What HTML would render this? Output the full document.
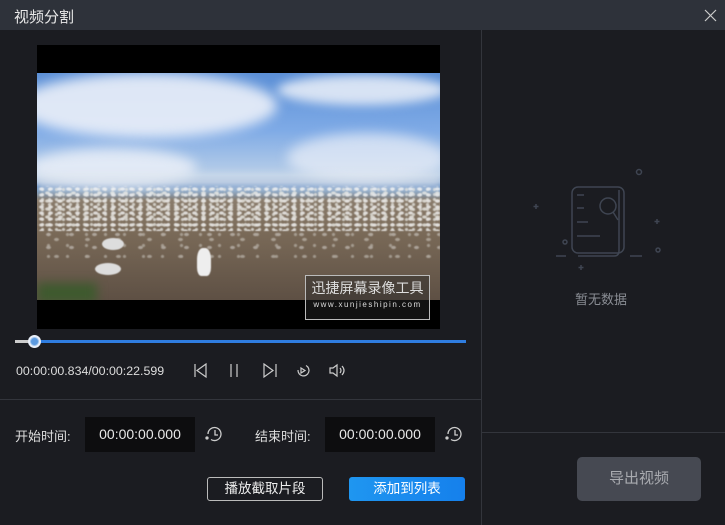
<!DOCTYPE html>
<html><head><meta charset="utf-8"><style>
*{margin:0;padding:0;box-sizing:border-box}
body{width:725px;height:525px;background:#1b1c21;font-family:"Liberation Sans","Noto Sans CJK SC",sans-serif;color:#ddd;position:relative;overflow:hidden}
.abs{position:absolute}
.title{left:0;top:0;width:725px;height:30px;background:#2e323a}
.title span{position:absolute;left:14px;top:6px;font-size:15px;color:#e8e8e8}
.btn{font-size:13px;text-align:center;border-radius:3px}
.birds{background-image:
radial-gradient(ellipse 3px 2px at 50% 50%,rgba(245,245,245,.95) 60%,transparent 100%),
radial-gradient(ellipse 3px 2px at 50% 50%,rgba(240,240,235,.9) 60%,transparent 100%),
radial-gradient(ellipse 2px 2px at 50% 50%,rgba(230,230,225,.9) 60%,transparent 100%);
background-size:9px 6px,13px 8px,7px 5px;background-position:0 0,4px 3px,2px 1px;filter:blur(.6px)}
</style></head><body>
<div class="abs title"><span>视频分割</span>
<svg class="abs" style="left:704px;top:9px" width="13" height="13"><path d="M1 1L12 12M12 1L1 12" stroke="#ccc" stroke-width="1.2"/></svg></div>
<div class="abs" style="left:481px;top:30px;width:1px;height:495px;background:#33353c"></div>
<div class="abs" style="left:0;top:399px;width:481px;height:1px;background:#33353c"></div>
<div class="abs" style="left:482px;top:432px;width:243px;height:1px;background:#33353c"></div>
<div class="abs" style="left:37px;top:45px;width:403px;height:284px;background:#000"></div>
<div class="abs" style="left:37px;top:73px;width:403px;height:227px;overflow:hidden;background:linear-gradient(#5b8fd6 0%,#7eaae6 25%,#b9cfe8 45%,#9cb6d8 48%,#5a86c0 50%,#6c8fb5 52%,#8a7c6c 56%,#7a6a58 70%,#5e5044 100%)">
<div class="abs" style="left:-20px;top:0;width:260px;height:65px;border-radius:50%;background:rgba(235,240,248,.9);filter:blur(6px)"></div>
<div class="abs" style="left:240px;top:2px;width:170px;height:30px;border-radius:50%;background:rgba(235,240,248,.85);filter:blur(5px)"></div>
<div class="abs" style="left:-10px;top:75px;width:170px;height:40px;border-radius:50%;background:rgba(235,240,248,.85);filter:blur(6px)"></div>
<div class="abs" style="left:250px;top:60px;width:160px;height:50px;border-radius:50%;background:rgba(235,240,248,.7);filter:blur(6px)"></div>
<div class="abs" style="left:0;top:100px;width:403px;height:20px;background:rgba(220,228,238,.5);filter:blur(4px)"></div>
<div class="abs birds" style="left:0;top:113px;width:403px;height:45px;opacity:.85"></div>
<div class="abs birds" style="left:0;top:155px;width:403px;height:30px;opacity:.45;background-size:23px 13px,31px 17px,19px 11px"></div>
<div class="abs" style="left:160px;top:175px;width:14px;height:28px;background:#eee;border-radius:40% 40% 30% 30%;filter:blur(.5px)"></div>
<div class="abs" style="left:65px;top:165px;width:22px;height:12px;background:#ddd;border-radius:50%;filter:blur(.5px)"></div>
<div class="abs" style="left:58px;top:190px;width:26px;height:12px;background:#ddd;border-radius:50%;filter:blur(.5px)"></div>
<div class="abs" style="left:0;top:210px;width:60px;height:20px;background:#3e5a2e;filter:blur(5px)"></div>
</div>
<div class="abs" style="left:305px;top:275px;width:125px;height:45px;border:1px solid #bbb;background:rgba(40,40,40,.45);text-align:center;color:#ddd">
<div style="font-size:14px;line-height:20px;margin-top:2px">迅捷屏幕录像工具</div>
<div style="font-size:8px;letter-spacing:1.5px;line-height:14px">www.xunjieshipin.com</div></div>
<div class="abs" style="left:15px;top:340px;width:451px;height:3px;background:#2f7de0"></div>
<div class="abs" style="left:15px;top:340px;width:20px;height:3px;background:#ccc"></div>
<div class="abs" style="left:28px;top:335px;width:13px;height:13px;border-radius:50%;background:#9cc3ee;border:2px solid #e8eef8"></div>
<div class="abs" style="left:31px;top:338px;width:7px;height:7px;border-radius:50%;background:#5c9ae0"></div>
<div class="abs" style="left:16px;top:364px;font-size:12.4px;color:#ddd">00:00:00.834/00:00:22.599</div>
<svg class="abs" style="left:190px;top:362px" width="160" height="18" fill="none" stroke="#ccc" stroke-width="1.2">
<path d="M5 2V15M16 2L7 8.5L16 15Z"/>
<path d="M41 2V15M47 2V15"/>
<path d="M74 2L83 8.5L74 15ZM86 2V15"/>
<path d="M116 3.5A5.5 5.5 0 1 1 108 8"/><path d="M111 6L115 8.5L111 11Z"/>
<path d="M140 6H143L147 3V14L143 11H140Z M150 6Q152 8.5 150 11 M152 4Q156 8.5 152 13"/>
</svg>
<div class="abs" style="left:15px;top:426px;font-size:13px">开始时间:</div>
<div class="abs" style="left:85px;top:417px;width:110px;height:35px;background:#0d0d0f;font-size:14px;text-align:center;line-height:35px;color:#e8e8e8">00:00:00.000</div>
<div class="abs" style="left:255px;top:426px;font-size:13px">结束时间:</div>
<div class="abs" style="left:325px;top:417px;width:110px;height:35px;background:#0d0d0f;font-size:14px;text-align:center;line-height:35px;color:#e8e8e8">00:00:00.000</div>
<svg class="abs" style="left:204px;top:425px" width="20" height="18" fill="none" stroke="#ccc" stroke-width="1.3"><path d="M4 9A6.5 6.5 0 1 1 7 14.5M11 5V10H14"/><circle cx="3" cy="13" r="1" fill="#ccc"/></svg>
<svg class="abs" style="left:444px;top:425px" width="20" height="18" fill="none" stroke="#ccc" stroke-width="1.3"><path d="M4 9A6.5 6.5 0 1 1 7 14.5M11 5V10H14"/><circle cx="3" cy="13" r="1" fill="#ccc"/></svg>
<div class="abs btn" style="left:207px;top:477px;width:116px;height:24px;border:1px solid #bbb;line-height:22px;color:#eee;font-size:13.5px">播放截取片段</div>
<div class="abs btn" style="left:349px;top:477px;width:116px;height:24px;background:linear-gradient(90deg,#1f96f0,#1580ec);line-height:24px;color:#fff;font-size:13.5px">添加到列表</div>
<svg class="abs" style="left:530px;top:166px" width="135" height="110" fill="none" stroke="#3f4552" stroke-width="1.5">
<rect x="42" y="21" width="52" height="66" rx="6"/>
<path d="M89 24V85Q89 90 84 90H48"/>
<path d="M47 29H54M47 42H54M47 56H58M47 70H70"/>
<circle cx="78" cy="40" r="8"/><path d="M83 46L88 54"/>
<path d="M26 90H36M100 90H112"/>
<circle cx="109" cy="6" r="2.5"/><circle cx="35" cy="76" r="2"/><circle cx="128" cy="84" r="2"/>
<path d="M6 38V43M3.5 40.5H8.5M127 53V58M124.5 55.5H129.5M51 99V104M48.5 101.5H53.5"/>
</svg>
<div class="abs" style="left:575px;top:289px;font-size:13px;color:#8a8d94">暂无数据</div>
<div class="abs btn" style="left:577px;top:457px;width:124px;height:44px;background:#464952;border-radius:5px;line-height:44px;font-size:15px;color:#a9abb0">导出视频</div>
</body></html>
